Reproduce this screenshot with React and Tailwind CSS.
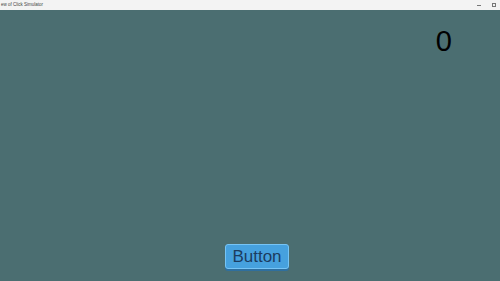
export default function App() {
  return (
    <div className="w-[500px] h-[281px] flex flex-col bg-[#4b6e71] overflow-hidden font-['Liberation_Sans',sans-serif]">
      <div className="h-[10px] bg-[#f3f3f3] flex items-center justify-between shrink-0">
        <span className="text-[4.5px] leading-none text-[#444] pl-[1px]">ew of Click Simulator</span>
        <div className="flex items-center gap-[11px] pr-[4px]">
          <div className="w-[4px] h-px bg-[#777]" />
          <div className="w-[4px] h-[4px] border border-[#777]" />
        </div>
      </div>
      <div className="flex-1 flex flex-col">
        <div className="flex justify-end pr-[48px] pt-[17px]">
          <span className="text-[29px] leading-none text-black">0</span>
        </div>
        <div className="flex-1" />
        <div className="flex justify-center pb-[12px] pl-[14px]">
          <button className="w-[64px] h-[25px] rounded-[3px] bg-[#46a1de] border border-[#76c4f5] shadow-[0_2px_0_#2f6f9e] text-[#1c3c5f] text-[17px] leading-none flex items-center justify-center">
            Button
          </button>
        </div>
      </div>
    </div>
  );
}
